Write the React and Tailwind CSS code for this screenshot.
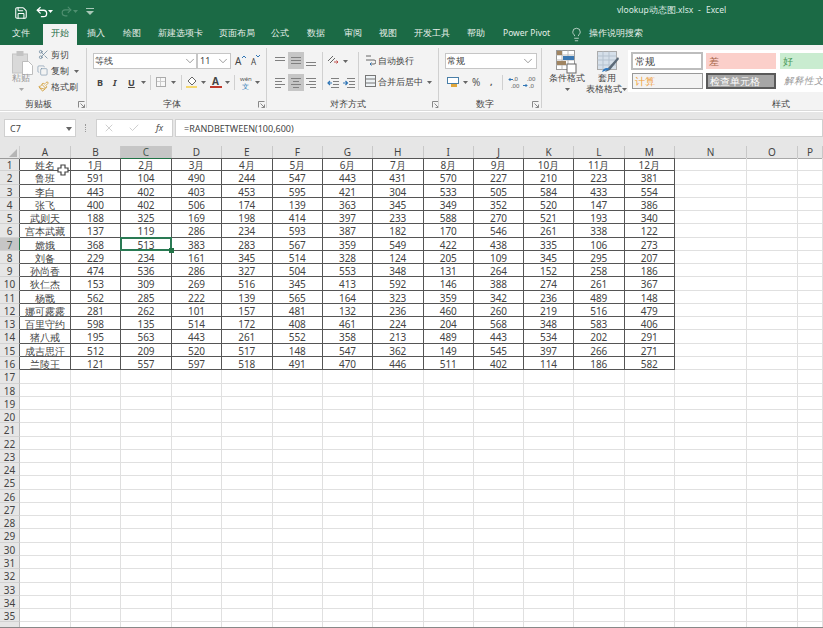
import React from "react";
import { X, Check, ChevronDown, Lightbulb, Save, Undo2, Redo2, Scissors, Copy, Paintbrush } from "lucide-react";

const rows = [
  ["姓名","1月","2月","3月","4月","5月","6月","7月","8月","9月","10月","11月","12月"],
  ["鲁班",591,104,490,244,547,443,431,570,227,210,223,381],
  ["李白",443,402,403,453,595,421,304,533,505,584,433,554],
  ["张飞",400,402,506,174,139,363,345,349,352,520,147,386],
  ["武则天",188,325,169,198,414,397,233,588,270,521,193,340],
  ["宫本武藏",137,119,286,234,593,387,182,170,546,261,338,122],
  ["嫦娥",368,513,383,283,567,359,549,422,438,335,106,273],
  ["刘备",229,234,161,345,514,328,124,205,109,345,295,207],
  ["孙尚香",474,536,286,327,504,553,348,131,264,152,258,186],
  ["狄仁杰",153,309,269,516,345,413,592,146,388,274,261,367],
  ["杨戬",562,285,222,139,565,164,323,359,342,236,489,148],
  ["娜可露露",281,262,101,157,481,132,236,460,260,219,516,479],
  ["百里守约",598,135,514,172,408,461,224,204,568,348,583,406],
  ["猪八戒",195,563,443,261,552,358,213,489,443,534,202,291],
  ["成吉思汗",512,209,520,517,148,547,362,149,545,397,266,271],
  ["兰陵王",121,557,597,518,491,470,446,511,402,114,186,582],
];
const colLetters = ["A","B","C","D","E","F","G","H","I","J","K","L","M","N","O","P"];
const font = "[font-family:'Liberation_Sans','Noto_Sans_CJK_SC',sans-serif]";
const tabs = ["文件","开始","插入","绘图","新建选项卡","页面布局","公式","数据","审阅","视图","开发工具","帮助","Power Pivot"];
const tabX = [12,51,87,123,158,219,271,307,344,379,414,467,503];

function Launcher({ x }) {
  return (
    <svg className="absolute top-[101px]" style={{ left: x }} width="7" height="7" viewBox="0 0 7 7" fill="none" stroke="#888">
      <path d="M.5 6.500v-6h6M2.500 2.500l4 4M3.500 6.500h3v-3" />
    </svg>
  );
}
function Caret({ x, y, c = "#666" }) {
  return (
    <svg className="absolute" style={{ left: x, top: y }} width="5" height="3" viewBox="0 0 5 3" fill={c}><path d="M0 0h5L2.500 3z" /></svg>
  );
}
function Lines({ x, y, widths, align = "items-center", active, h = 17, w = 16, justify = "justify-center" }) {
  return (
    <div className={`absolute flex flex-col gap-[2px] ${justify} ${align} ${active ? "bg-[#c6c6c6]" : ""}`} style={{ left: x, top: y, width: w, height: h }}>
      {widths.map((n, i) => <div key={i} className="h-px bg-[#808080]" style={{ width: n }} />)}
    </div>
  );
}
function T({ x, y, children, cls = "" }) {
  return <div className={`absolute whitespace-nowrap leading-none ${cls}`} style={{ left: x, top: y }}>{children}</div>;
}
function Sep({ x, y = 50, h = 52 }) {
  return <div className="absolute w-px bg-[#d0d0d0]" style={{ left: x, top: y, height: h }} />;
}
function Indent({ x, flip }) {
  return (
    <svg className="absolute top-[78px]" style={{ left: x }} width="12" height="10" viewBox="0 0 12 10" fill="none">
      <path d="M4 .5h8M6 3.500h6M6 6.500h6M4 9.500h8" stroke="#808080" />
      <path d={flip ? "M0 5h4M2.500 3l2 2-2 2" : "M5 5H1M3 3L1 5l2 2"} stroke="#2f75b5" strokeWidth="1.200" />
    </svg>
  );
}

function Ribbon() {
  const grp = "text-[8.5px] text-[#444]";
  return (
    <div className="absolute left-0 top-0 w-[823px] h-[112px]">
      <div className="absolute inset-x-0 top-0 h-[45px] bg-[#1b6a45]" />
      <Save className="absolute left-[14px] top-[6px] text-white" size={14} strokeWidth={1.8} />
      <Undo2 className="absolute left-[35px] top-[5px] text-white" size={14} strokeWidth={2.2} />
      <Caret x={48} y={10} c="#ffffff" />
      <Redo2 className="absolute left-[60px] top-[5px] text-[#4f8f70]" size={13} strokeWidth={2} />
      <Caret x={73} y={10} c="#4f8f70" />
      <svg className="absolute left-[86px] top-[8px]" width="8" height="7" viewBox="0 0 8 7" fill="#a9c8b8"><rect x="0" y="0" width="8" height="1" /><path d="M0 3h8L4 7z" /></svg>
      <T x={617} y={6} cls="text-[8.5px] text-[#dfeae4]">vlookup动态图.xlsx</T>
      <T x={698} y={6} cls="text-[8.5px] text-[#dfeae4]">-</T>
      <T x={706} y={6} cls="text-[8.5px] text-[#dfeae4]">Excel</T>
      <div className="absolute left-[43px] top-[24px] w-[34px] h-[21px] bg-[#f3f3f3]" />
      {tabs.map((t, i) => (
        <T key={t} x={tabX[i]} y={29} cls={`text-[8.5px] ${t === "开始" ? "text-[#1b6a45]" : "text-[#e6efe9]"}`}>{t}</T>
      ))}
      <Lightbulb className="absolute left-[569px] top-[27px] text-[#e6efe9]" size={15} strokeWidth={1.2} />
      <T x={589} y={29} cls="text-[8.5px] text-[#e6efe9]">操作说明搜索</T>

      <div className="absolute inset-x-0 top-[45px] h-[66px] bg-[#f3f3f3] border-b border-[#dadada]" />
      {/* clipboard */}
      <svg className="absolute left-[12px] top-[50px]" width="21" height="25" viewBox="0 0 21 25"><rect x="0.500" y="4" width="15" height="19" fill="#d9d9d9" stroke="#c4c4c4" /><rect x="4.500" y="1" width="7" height="5" fill="#c3c3c3" /><path d="M10.500 11.500h6l4 4v9h-10z" fill="#fff" stroke="#bdbdbd" /></svg>
      <T x={12} y={74} cls="text-[8.5px] text-[#9a9a9a]">粘贴</T>
      <Caret x={19} y={88} c="#aaa" />
      <Scissors className="absolute left-[38px] top-[49px] text-[#52708a]" size={11} strokeWidth={1.4} />
      <T x={51} y={51} cls={grp}>剪切</T>
      <Copy className="absolute left-[37px] top-[65px] text-[#6f8aa3]" size={11} strokeWidth={1.3} />
      <T x={51} y={67} cls={grp}>复制</T>
      <Caret x={74} y={70} />
      <Paintbrush className="absolute left-[38px] top-[81px] text-[#d19a2f]" size={11} strokeWidth={1.8} />
      <T x={51} y={83} cls={grp}>格式刷</T>
      <T x={25} y={100} cls={grp}>剪贴板</T>
      <Launcher x={78} />
      <Sep x={86} y={48} h={60} />

      {/* font */}
      <div className="absolute left-[93px] top-[53px] w-[104px] h-[16px] bg-white border border-[#c6c6c6]" />
      <div className="absolute left-[197px] top-[53px] w-[34px] h-[16px] bg-white border border-[#c6c6c6]" />
      <T x={95} y={57} cls={grp}>等线</T>
      <ChevronDown className="absolute left-[183px] top-[54px] text-[#666]" size={14} strokeWidth={1.1} />
      <T x={200} y={56} cls="text-[9px] text-[#444]">11</T>
      <ChevronDown className="absolute left-[216px] top-[54px] text-[#666]" size={14} strokeWidth={1.1} />
      <T x={235} y={56} cls="text-[10px] text-[#444]">A</T>
      <svg className="absolute left-[242px] top-[55px]" width="4" height="3" viewBox="0 0 4 3" fill="none" stroke="#2f75b5"><path d="M0 3l2-2 2 2" /></svg>
      <T x={251} y={58} cls="text-[8px] text-[#444]">A</T>
      <svg className="absolute left-[256px] top-[55px]" width="4" height="3" viewBox="0 0 4 3" fill="none" stroke="#2f75b5"><path d="M0 0l2 2 2-2" /></svg>
      <T x={97} y={78} cls="text-[9px] font-bold text-[#444]">B</T>
      <T x={113} y={78} cls="text-[9px] italic font-bold text-[#444] [font-family:'Liberation_Serif',serif]">I</T>
      <T x={128} y={78} cls="text-[9px] font-bold underline text-[#444]">U</T>
      <Caret x={141} y={81} />
      <Sep x={150} y={75} h={15} />
      <div className="absolute left-[156px] top-[77px] w-[10px] h-[10px] grid grid-cols-2 grid-rows-2 border border-[#aaa] bg-[#f8f8f8]">
        <div className="border-r border-b border-[#ccc]" /><div className="border-b border-[#ccc]" /><div className="border-r border-[#ccc]" /><div />
      </div>
      <Caret x={171} y={81} />
      <Sep x={181} y={75} h={15} />
      <svg className="absolute left-[185px] top-[75px]" width="13" height="13" viewBox="0 0 13 13"><path d="M3 6l4-4 4 4-4 4z" fill="#fff" stroke="#666" /><rect x="1" y="11" width="11" height="2" fill="#f5d76e" /></svg>
      <Caret x={201} y={81} />
      <T x={212} y={76} cls="text-[10px] font-bold text-[#444]">A</T>
      <div className="absolute left-[210px] top-[86px] w-[12px] h-[2px] bg-[#c0392b]" />
      <Caret x={225} y={81} />
      <Sep x={234} y={75} h={15} />
      <T x={240} y={76} cls="text-[6px] text-[#555]">wén</T>
      <T x={242} y={83} cls="text-[7px] text-[#2f7db8]">文</T>
      <Caret x={255} y={81} />
      <T x={163} y={100} cls={grp}>字体</T>
      <Launcher x={258} />
      <Sep x={266} y={48} h={60} />

      {/* alignment */}
      <Lines x={272} y={55} widths={[10, 10]} h={8} />
      <Lines x={288} y={52} widths={[10, 10, 10]} active />
      <Lines x={303} y={60} widths={[10, 10]} h={8} />
      <Lines x={272} y={74} widths={[10, 7, 10, 6]} align="items-start pl-[3px]" />
      <Lines x={288} y={74} widths={[10, 6, 10, 6]} active />
      <Lines x={303} y={74} widths={[10, 7, 10, 6]} align="items-end pr-[3px]" />
      <Sep x={322} y={52} h={38} />
      <svg className="absolute left-[327px] top-[54px]" width="12" height="11" viewBox="0 0 12 11" fill="none" stroke="#666"><path d="M1 7l5-5M3 9l5-5" /><path d="M7 8h4M9.500 6.500L11 8 9.500 9.500" stroke="#c0504d" /></svg>
      <Caret x={343} y={60} />
      <Indent x={327} />
      <Indent x={343} flip />
      <Sep x={358} y={52} h={38} />
      <svg className="absolute left-[365px] top-[54px]" width="11" height="13" viewBox="0 0 11 13" fill="none" stroke="#666"><path d="M1 2h5M1 6h8a1.500 1.500 0 010 4H5" /><path d="M6.500 8.500L5 10l1.500 1.500" stroke="#2f75b5" /></svg>
      <T x={378} y={57} cls={grp}>自动换行</T>
      <svg className="absolute left-[365px] top-[75px]" width="11" height="12" viewBox="0 0 11 12" fill="#eef3f6" stroke="#777"><rect x=".5" y=".5" width="10" height="11" /><path d="M.5 4h10M.5 8h10" /></svg>
      <T x={378} y={78} cls={grp}>合并后居中</T>
      <Caret x={427} y={81} />
      <T x={330} y={100} cls={grp}>对齐方式</T>
      <Launcher x={432} />
      <Sep x={438} y={48} h={60} />

      {/* number */}
      <div className="absolute left-[445px] top-[53px] w-[92px] h-[16px] bg-white border border-[#c6c6c6]" />
      <T x={447} y={57} cls={grp}>常规</T>
      <ChevronDown className="absolute left-[521px] top-[54px] text-[#666]" size={14} strokeWidth={1.1} />
      <div className="absolute left-[447px] top-[77px] w-[12px] h-[7px] border border-[#4a7fa8] bg-white" />
      <div className="absolute left-[451px] top-[84px] w-[6px] h-[3px] bg-[#e0a73c]" />
      <Caret x={463} y={81} />
      <T x={472} y={77} cls="text-[10px] text-[#555]">%</T>
      <T x={490} y={77} cls="text-[9px] font-bold text-[#555]">,</T>
      <Sep x={502} y={75} h={15} />
      <T x={513} y={76} cls="text-[6px] text-[#555]">.0</T>
      <T x={511} y={83} cls="text-[6px] text-[#555]">.00</T>
      <svg className="absolute left-[508px] top-[77px]" width="5" height="5" viewBox="0 0 5 5" fill="none" stroke="#2f75b5"><path d="M5 2.500H1M2.500 1L1 2.500 2.500 4" /></svg>
      <T x={527} y={76} cls="text-[6px] text-[#555]">.00</T>
      <T x={529} y={83} cls="text-[6px] text-[#555]">.0</T>
      <svg className="absolute left-[523px] top-[83px]" width="5" height="5" viewBox="0 0 5 5" fill="none" stroke="#2f75b5"><path d="M0 2.500h4M2.500 1L4 2.500 2.500 4" /></svg>
      <T x={476} y={100} cls={grp}>数字</T>
      <Launcher x={532} />
      <Sep x={541} y={48} h={60} />

      {/* styles */}
      <svg className="absolute left-[556px] top-[50px]" width="21" height="24" viewBox="0 0 21 24"><rect x=".5" y=".5" width="18" height="19" fill="#fff" stroke="#999" /><path d="M.5 5h18M.5 10h18M.5 15h18M6 .5v19M12 .5v19" stroke="#bbb" /><rect x="1" y="1" width="5" height="4" fill="#a08562" /><rect x="7" y="6" width="11" height="4" fill="#3b78b2" /><rect x="1" y="11" width="9" height="4" fill="#a08562" /><rect x="11" y="14" width="9" height="9" fill="#fff" stroke="#666" /></svg>
      <T x={549} y={74} cls={grp}>条件格式</T>
      <Caret x={565} y={88} />
      <svg className="absolute left-[597px] top-[51px]" width="22" height="22" viewBox="0 0 22 22"><rect x=".5" y=".5" width="19" height="18" fill="#d6e0ea" stroke="#aaa" /><path d="M.5 5h19M.5 9h19M.5 14h19M6 .5v18M12 .5v18" stroke="#b5c2cf" /><path d="M21 6L11 17l-3 4 5-2L22 8z" fill="#5b6a78" /><path d="M5 21c1-4 5-5 8-3z" fill="#2f78c0" /></svg>
      <T x={598} y={74} cls={grp}>套用</T>
      <T x={586} y={85} cls={grp}>表格格式</T>
      <Caret x={622} y={88} />
      <div className="absolute left-[628px] top-[50px] w-[195px] h-[42px] bg-white" />
      <div className="absolute left-[631px] top-[52px] w-[72px] h-[18px] bg-white border-2 border-[#bdbdbd] text-[10px] text-[#444] leading-[14px] pl-[2px]">常规</div>
      <div className="absolute left-[706px] top-[53px] w-[70px] h-[16px] bg-[#fbcfca] text-[10px] text-[#a8684c] leading-[16px] pl-[3px]">差</div>
      <div className="absolute left-[780px] top-[53px] w-[43px] h-[16px] bg-[#c9ecd0] text-[10px] text-[#4c9a5a] leading-[16px] pl-[3px]">好</div>
      <div className="absolute left-[632px] top-[73px] w-[71px] h-[16px] bg-[#f3f3f3] border border-[#999] text-[10px] text-[#f0a03c] leading-[14px] pl-[2px]">计算</div>
      <div className="absolute left-[706px] top-[73px] w-[70px] h-[16px] bg-[#a6a6a6] border-2 border-[#5a5a5a] text-[10px] text-white leading-[12px] pl-[2px]">检查单元格</div>
      <div className="absolute left-[784px] top-[75px] text-[9.5px] italic text-[#9a9a9a] leading-[12px] whitespace-nowrap">解释性文</div>
      <T x={772} y={100} cls={grp}>样式</T>
    </div>
  );
}

function FormulaBar() {
  return (
    <div className="absolute left-0 top-[112px] w-[823px] h-[34px] bg-[#e6e6e6]">
      <div className="absolute left-[4px] top-[7px] w-[72px] h-[18px] bg-white border border-[#d0d0d0]">
        <span className="absolute left-[5px] top-[3px] text-[9px] leading-[12px] text-[#444]">C7</span>
        <svg className="absolute left-[61px] top-[7px]" width="6" height="4" viewBox="0 0 6 4" fill="#666"><path d="M0 0h6L3 4z" /></svg>
      </div>
      <div className="absolute left-[85px] top-[12px] h-[8px] w-px border-l border-dotted border-[#999]" />
      <div className="absolute left-[96px] top-[7px] w-[77px] h-[18px] bg-white border border-[#d0d0d0]" />
      <X className="absolute left-[103px] top-[10px] text-[#b5b5b5]" size={12} strokeWidth={1.3} />
      <Check className="absolute left-[128px] top-[10px] text-[#b5b5b5]" size={12} strokeWidth={1.3} />
      <span className="absolute left-[156px] top-[10px] text-[9px] italic leading-[12px] text-[#555] [font-family:'Liberation_Serif',serif]">fx</span>
      <div className="absolute left-[175px] top-[7px] w-[648px] h-[18px] bg-white border border-[#d0d0d0]">
        <span className="absolute left-[8px] top-[3px] text-[9px] leading-[12px] text-[#444]">=RANDBETWEEN(100,600)</span>
      </div>
    </div>
  );
}

function Sheet() {
  const colW = [51, 50, 51, 50, 50.5, 50.5, 50, 50.5, 50.5, 50, 50, 50.5, 50.5, 72, 51, 25];
  const colTemplate = "20px " + colW.map(w => w + "px").join(" ");
  const rowH = 13.28;
  const allRows = Array.from({ length: 36 }, (_, i) => i);
  return (
    <div className="absolute left-0 top-[146px] w-[823px] h-[482px] bg-white overflow-hidden">
      <div className="grid h-[12px] bg-[#e6e6e6]" style={{ gridTemplateColumns: colTemplate }}>
        <div className="relative border-r border-[#cfcfcf] border-b border-b-[#9a9a9a]">
          <svg className="absolute right-[2px] bottom-[1px]" width="8" height="8" viewBox="0 0 8 8" fill="#b5b5b5"><path d="M8 0v8H0z" /></svg>
        </div>
        {colLetters.map((c, i) => (
          <div key={c} className={`text-center text-[10px] leading-[12px] border-r border-b ${c === "C" ? "bg-[#c6c6c6] text-[#4a5a52] border-r-[#c8c8c8] border-b-[#217346]" : i < 13 ? "text-[#444] border-r-[#c8c8c8] border-b-[#555555]" : "text-[#444] border-r-[#c8c8c8] border-b-[#a8a8a8]"}`}>{c}</div>
        ))}
      </div>
      {allRows.map(r => (
        <div key={r} className="grid" style={{ gridTemplateColumns: colTemplate, height: rowH }}>
          <div className={`text-center text-[10px] leading-[15px] overflow-hidden border-r border-b border-b-[#d2d2d2] ${r === 6 ? "bg-[#c6c6c6] text-[#4a5a52] border-r-[#217346]" : r < 16 ? "bg-[#e6e6e6] text-[#444] border-r-[#555555]" : "bg-[#e6e6e6] text-[#444] border-r-[#bdbdbd]"}`}>{r < 35 ? r + 1 : ""}</div>
          {colLetters.map((c, i) => {
            const v = rows[r] && rows[r][i];
            const inTable = r < 16 && i < 13;
            return (
              <div key={c} className={`text-center text-[10px] leading-[15px] text-[#444] border-r border-b overflow-hidden whitespace-nowrap ${inTable ? "border-[#555555]" : "border-[#e0e0e0]"}`}>{v}</div>
            );
          })}
        </div>
      ))}
      <div className="absolute left-[120px] top-[91px] w-[52px] h-[14px] border-2 border-[#2a7a54]" />
      <div className="absolute left-[169px] top-[102px] w-[5px] h-[5px] bg-[#217346]" />
      <div className="absolute left-0 top-[481px] w-[823px] h-px bg-[#888]" />
      <svg className="absolute left-[57px] top-[18px]" width="12" height="12" viewBox="0 0 12 12"><path d="M4 1h4v3h3v4H8v3H4V8H1V4h3z" fill="#fff" stroke="#444" strokeWidth="1.200" /></svg>
    </div>
  );
}

export default function App() {
  return (
    <div className={`relative w-[823px] h-[628px] overflow-hidden bg-white ${font}`}>
      <Ribbon />
      <FormulaBar />
      <Sheet />
    </div>
  );
}
